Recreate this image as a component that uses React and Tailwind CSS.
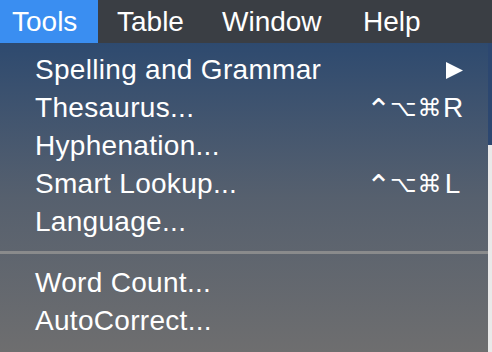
const FONT = { fontFamily: '"Liberation Sans", Arial, sans-serif' };
const SYM = { fontFamily: '"DejaVu Sans", sans-serif' };

const ITEMS_TOP = [
  { label: 'Spelling and Grammar', submenu: true },
  { label: 'Thesaurus...', key: 'R' },
  { label: 'Hyphenation...' },
  { label: 'Smart Lookup...', key: 'L' },
  { label: 'Language...' },
];
const ITEMS_BOTTOM = [{ label: 'Word Count...' }, { label: 'AutoCorrect...' }];

function Shortcut({ letter }) {
  return (
    <div className="flex items-center">
      <span className="w-[20px] text-center text-[30px] leading-none mt-[4px]" style={SYM}>⌃</span>
      <span className="ml-[4px] w-[24px] text-center text-[23px] leading-none" style={SYM}>⌥</span>
      <span className="ml-[3px] w-[25px] text-center text-[24px] leading-none" style={SYM}>⌘</span>
      <span className="ml-[1px] w-[19px] text-center">{letter}</span>
    </div>
  );
}

function Row({ item }) {
  return (
    <div className={`h-[38px] flex items-center justify-between pl-[35px] ${item.submenu ? 'pr-[25px]' : 'pr-[26px]'}`}>
      <span className="tracking-[0.3px]">{item.label}</span>
      {item.submenu && (
        <svg width="17" height="17" viewBox="0 0 17 17">
          <polygon points="0,0 17,8.5 0,17" fill="white" />
        </svg>
      )}
      {item.key && <Shortcut letter={item.key} />}
    </div>
  );
}

export default function App() {
  return (
    <div className="w-[492px] h-[352px] overflow-hidden flex flex-col bg-[#6e6e6f] text-white" style={FONT}>
      {/* Menu bar */}
      <div className="h-[43px] shrink-0 flex items-stretch bg-[#3a3e44] text-[28px]">
        <div className="w-[98px] bg-[#3a8ef1] flex items-center pl-[12px]">Tools</div>
        <div className="flex items-center pl-[19px] w-[124px]">Table</div>
        <div className="flex items-center w-[141px]">Window</div>
        <div className="flex items-center">Help</div>
      </div>

      <div className="flex flex-1 min-h-0">
        {/* Dropdown */}
        <div className="w-[488px] flex flex-col text-[28px] bg-gradient-to-b from-[#2e4a6f] via-[#56606e] to-[#6e6e6f] pt-[8px]">
          {ITEMS_TOP.map(it => <Row key={it.label} item={it} />)}
          <div className="h-[3px] bg-[#8a8b8c] mt-[10px] mb-[10px]" />
          {ITEMS_BOTTOM.map(it => <Row key={it.label} item={it} />)}
        </div>
        {/* Window behind */}
        <div className="flex-1 flex flex-col">
          <div className="h-[102px] bg-[#2c4770]" />
          <div className="flex-1 bg-[#e9e9e9]" />
        </div>
      </div>
    </div>
  );
}
